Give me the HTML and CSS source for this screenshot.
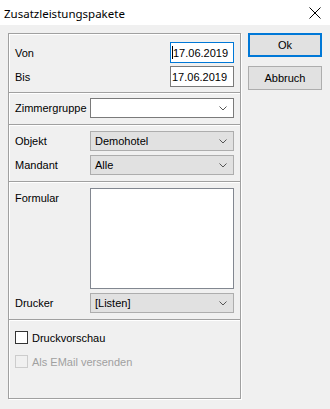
FILE: index.html
```html
<!DOCTYPE html>
<html lang="de">
<head>
<meta charset="utf-8">
<title>Zusatzleistungspakete</title>
<link rel="stylesheet" href="styles.css">
</head>
<body>
<div class="window">
  <div class="titlebar">
    <span class="title">Zusatzleistungspakete</span>
    <svg class="close" width="12" height="12" viewBox="0 0 12 12"><path d="M0.5 0.5 L11.5 11.5 M11.5 0.5 L0.5 11.5" stroke="#000" stroke-width="1" fill="none"/></svg>
  </div>
  <div class="content">
    <div class="group">
      <div class="section s1">
        <div class="row"><span class="label">Von</span><div class="date focus"><span class="caret"></span>17.06.2019</div></div>
        <div class="row"><span class="label">Bis</span><div class="date">17.06.2019</div></div>
      </div>
      <div class="sep"></div>
      <div class="section s2">
        <div class="row"><span class="label">Zimmergruppe</span><div class="combo edit"><span></span><svg class="chev" width="8" height="5" viewBox="0 0 8 5"><path d="M0.5 0.5 L4 4 L7.5 0.5" stroke="#555" stroke-width="1" fill="none"/></svg></div></div>
      </div>
      <div class="sep"></div>
      <div class="section s3">
        <div class="row"><span class="label">Objekt</span><div class="combo"><span>Demohotel</span><svg class="chev" width="8" height="5" viewBox="0 0 8 5"><path d="M0.5 0.5 L4 4 L7.5 0.5" stroke="#555" stroke-width="1" fill="none"/></svg></div></div>
        <div class="row"><span class="label">Mandant</span><div class="combo"><span>Alle</span><svg class="chev" width="8" height="5" viewBox="0 0 8 5"><path d="M0.5 0.5 L4 4 L7.5 0.5" stroke="#555" stroke-width="1" fill="none"/></svg></div></div>
      </div>
      <div class="sep"></div>
      <div class="section s4">
        <div class="row top"><span class="label">Formular</span><div class="listbox"></div></div>
        <div class="row"><span class="label">Drucker</span><div class="combo"><span>[Listen]</span><svg class="chev" width="8" height="5" viewBox="0 0 8 5"><path d="M0.5 0.5 L4 4 L7.5 0.5" stroke="#555" stroke-width="1" fill="none"/></svg></div></div>
      </div>
      <div class="sep"></div>
      <div class="section s5">
        <div class="check"><span class="box"></span><span>Druckvorschau</span></div>
        <div class="check disabled"><span class="box"></span><span>Als EMail versenden</span></div>
      </div>
    </div>
    <div class="buttons">
      <div class="btn default">Ok</div>
      <div class="btn">Abbruch</div>
    </div>
  </div>
</div>
</body>
</html>
```
FILE: styles.css
```css
html, body {
  margin: 0;
  padding: 0;
}
body {
  width: 330px;
  height: 409px;
  overflow: hidden;
  background: #f0f0f0;
  font-family: "Liberation Sans", Arial, sans-serif;
  font-size: 11px;
  color: #000;
}
.window {
  display: flex;
  flex-direction: column;
  height: 409px;
}
.titlebar {
  height: 25px;
  background: #fff;
  display: flex;
  align-items: center;
  justify-content: space-between;
  padding: 0 9px 0 4px;
  box-sizing: border-box;
}
.title {
  font-family: "Noto Sans", "Open Sans", sans-serif;
  font-size: 11.5px;
  margin-top: 1px;
}
.close {
  display: block;
  margin-top: 1px;
}
.content {
  display: flex;
  padding: 8px 8px 0 8px;
  gap: 7px;
}
.group {
  width: 233px;
  height: 366px;
  box-sizing: border-box;
  border: 1px solid #a0a0a0;
  box-shadow: inset 1px 1px 0 #fff, 1px 1px 0 #fff;
  display: flex;
  flex-direction: column;
}
.section {
  padding: 0 6px 0 6px;
  display: flex;
  flex-direction: column;
}
.s1 { padding-top: 8px; padding-bottom: 5px; gap: 3px; height: 58px; box-sizing: border-box; }
.s2 { padding-top: 4px; padding-bottom: 6px; }
.s3 { padding-top: 5px; padding-bottom: 6px; gap: 4px; }
.s4 { padding-top: 5px; padding-bottom: 6px; gap: 4px; }
.s5 { padding-top: 10px; gap: 11px; flex: 1; }
.sep {
  height: 1px;
  background: #a0a0a0;
  border-bottom: 1px solid #fff;
}
.row {
  display: flex;
  align-items: center;
  height: 20px;
}
.s1 .row { height: 21px; justify-content: space-between; }
.row.top {
  align-items: flex-start;
  height: 101px;
}
.row.top .label { margin-top: 4px; }
.label {
  width: 75px;
  flex: none;
}
.date {
  width: 64px;
  height: 21px;
  box-sizing: border-box;
  background: #fff;
  border: 1px solid #7a7a7a;
  display: flex;
  align-items: center;
  padding-left: 1px;
  position: relative;
}
.date.focus {
  border-color: #0078d7;
}
.caret {
  width: 1px;
  height: 13px;
  background: #000;
  margin-right: 0px;
}
.combo {
  flex: 1;
  height: 20px;
  box-sizing: border-box;
  background: #e1e1e1;
  border: 1px solid #adadad;
  display: flex;
  align-items: center;
  justify-content: space-between;
  padding: 0 6px 0 4px;
}
.combo.edit {
  background: #fff;
  border-color: #7a7a7a;
}
.chev { display: block; }
.listbox {
  flex: 1;
  height: 101px;
  box-sizing: border-box;
  background: #fff;
  border: 1px solid #828790;
}
.check {
  display: flex;
  align-items: center;
  height: 13px;
  gap: 4px;
}
.box {
  width: 13px;
  height: 13px;
  box-sizing: border-box;
  border: 1px solid #333;
  background: #fff;
}
.check.disabled { color: #a0a0a0; }
.check.disabled .box {
  border-color: #cccccc;
  background: #f0f0f0;
}
.buttons {
  display: flex;
  flex-direction: column;
  gap: 9px;
}
.btn {
  width: 74px;
  height: 24px;
  box-sizing: border-box;
  background: #e1e1e1;
  border: 1px solid #adadad;
  display: flex;
  align-items: center;
  justify-content: center;
}
.btn.default {
  border: 2px solid #0078d7;
}
```
